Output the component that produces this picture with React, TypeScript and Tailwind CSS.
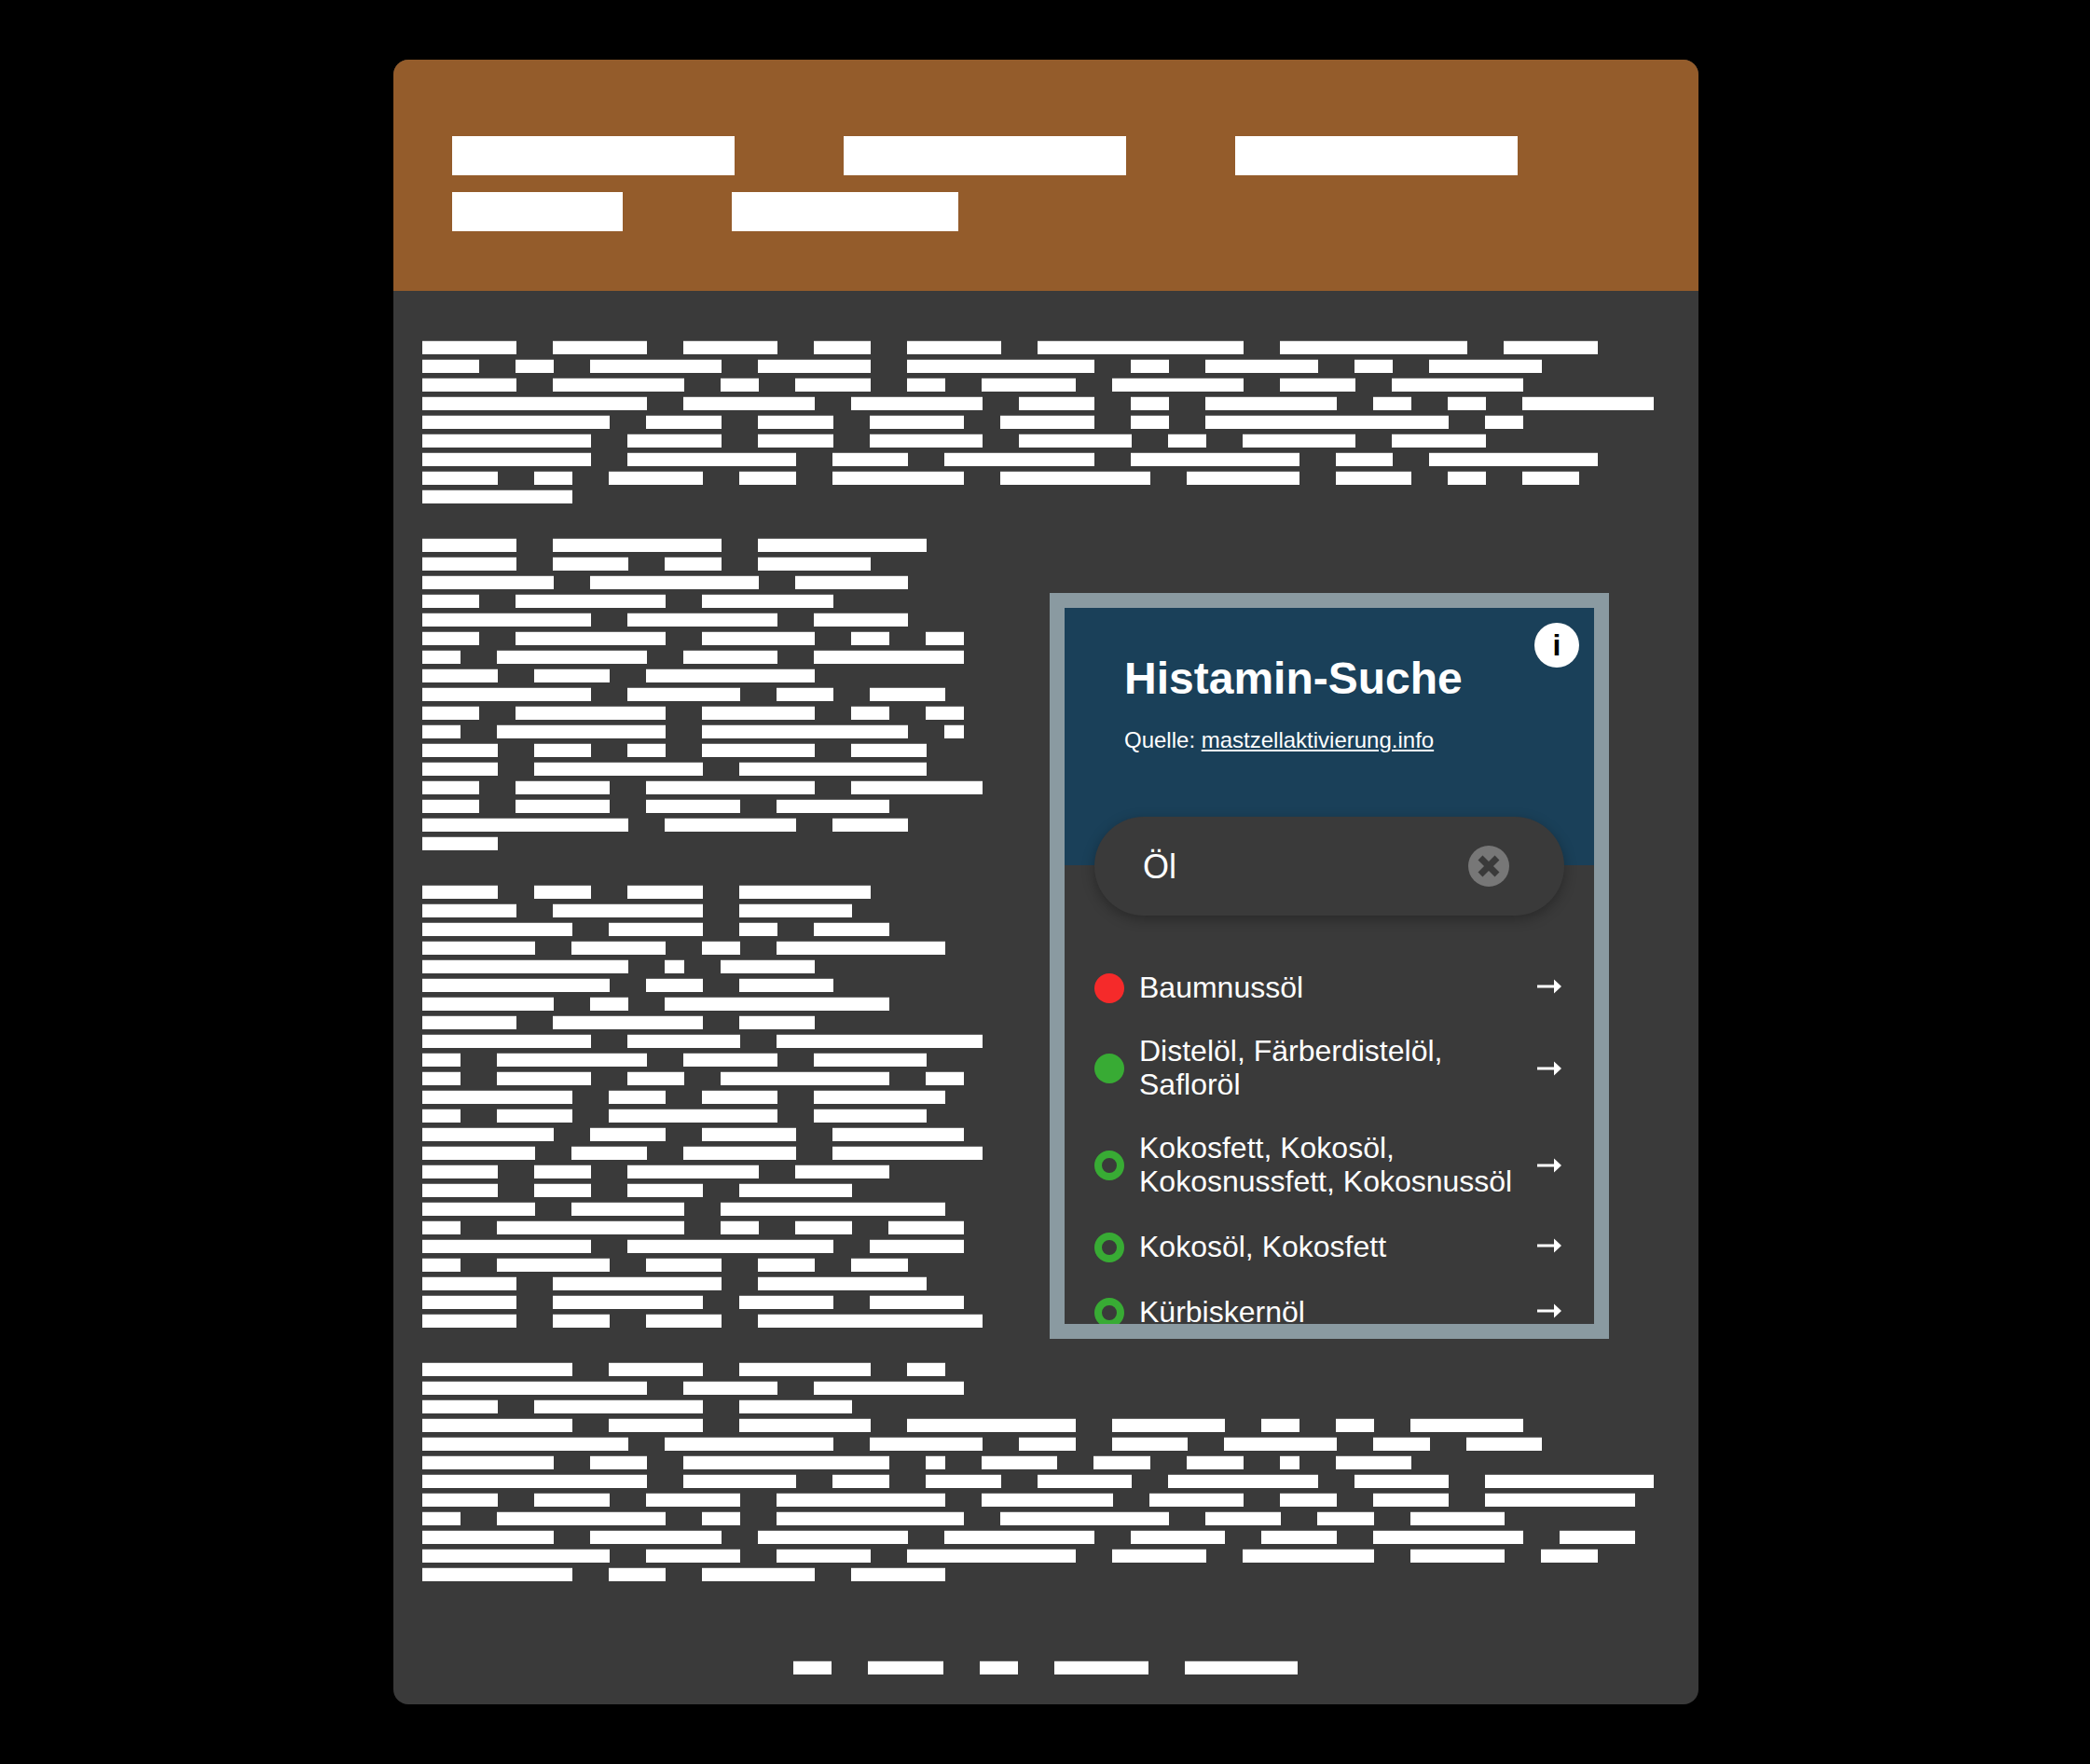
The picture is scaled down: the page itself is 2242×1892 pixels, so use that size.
const intro = [
  [5, 5, 5, 3, 5, 11, 10, 5],
  [3, 2, 7, 6, 10, 2, 6, 2, 6],
  [5, 7, 2, 4, 2, 5, 7, 4, 7],
  [12, 7, 7, 4, 2, 7, 2, 2, 7],
  [10, 4, 4, 5, 5, 2, 13, 2],
  [9, 5, 4, 6, 6, 2, 6, 5],
  [9, 9, 4, 8, 9, 3, 9],
  [4, 2, 5, 3, 7, 8, 6, 4, 2, 3],
  [8],
];

const sideOne = [
  [5, 9, 9],
  [5, 4, 3, 6],
  [7, 9, 6],
  [3, 8, 7],
  [9, 8, 5],
  [3, 8, 6, 2, 2],
  [2, 8, 5, 8],
  [4, 4, 9],
  [9, 6, 3, 4],
  [3, 8, 6, 2, 2],
  [2, 9, 11, 1],
  [4, 3, 2, 6, 4],
  [4, 9, 10],
  [3, 5, 9, 7],
  [3, 5, 5, 6],
  [11, 7, 4],
  [4],
];

const sideTwo = [
  [4, 3, 4, 7],
  [5, 8, 6],
  [8, 5, 2, 4],
  [6, 5, 2, 9],
  [11, 1, 5],
  [10, 3, 5],
  [7, 2, 12],
  [5, 8, 4],
  [9, 6, 11],
  [2, 8, 5, 6],
  [2, 5, 3, 9, 2],
  [8, 3, 4, 7],
  [2, 4, 9, 6],
  [7, 4, 5, 7],
  [6, 4, 6, 8],
  [4, 3, 7, 5],
  [4, 3, 4, 6],
  [6, 6, 12],
  [2, 10, 2, 3, 4],
  [9, 11, 5],
  [2, 6, 4, 3, 3],
  [5, 9, 9],
  [5, 8, 5, 5],
  [5, 3, 4, 12],
];

const outro = [
  [8, 5, 7, 2],
  [12, 5, 8],
  [4, 9, 6],
  [8, 5, 7, 9, 6, 2, 2, 6],
  [11, 9, 6, 3, 4, 6, 3, 4],
  [7, 3, 11, 1, 4, 3, 3, 1, 4],
  [12, 6, 3, 4, 5, 8, 5, 9],
  [4, 4, 5, 9, 7, 5, 3, 4, 8],
  [2, 9, 2, 10, 9, 4, 3, 5],
  [7, 7, 8, 8, 5, 4, 8, 4],
  [10, 5, 5, 9, 5, 7, 5, 3],
  [8, 3, 6, 5],
];

const results = [
  { name: "Baumnussöl", kind: "red", height: "min-h-[69px]", arrow: "mb-1" },
  { name: "Distelöl, Färberdistelöl, Safloröl", kind: "green", height: "min-h-[104px]", arrow: "" },
  { name: "Kokosfett, Kokosöl, Kokosnussfett, Kokosnussöl", kind: "ring", height: "min-h-[104px]", arrow: "" },
  { name: "Kokosöl, Kokosfett", kind: "ring", height: "min-h-[72px]", arrow: "mb-1" },
  { name: "Kürbiskernöl", kind: "ring", height: "min-h-[68px]", arrow: "mb-1" },
];

function Line({ words }: { words: number[] }) {
  return (
    <div className="flex h-5 gap-[39px]">
      {words.map((n, i) => (
        <div
          key={i}
          className="h-[15px] border-t border-[#666666] bg-white bg-clip-padding"
          style={{ width: n * 20 + 1 }}
        />
      ))}
    </div>
  );
}

function Para({ lines }: { lines: number[][] }) {
  return (
    <div>
      {lines.map((words, i) => (
        <Line key={i} words={words} />
      ))}
    </div>
  );
}

function HeadRow({ words }: { words: number[] }) {
  return (
    <div className="flex gap-[117px]">
      {words.map((n, i) => (
        <div key={i} className="h-[42px] bg-white" style={{ width: n * 60 + 3 }} />
      ))}
    </div>
  );
}

function Dot({ kind }: { kind: string }) {
  if (kind === "red") return <div className="h-8 w-8 shrink-0 rounded-full bg-[#f52a2a]" />;
  if (kind === "green") return <div className="h-8 w-8 shrink-0 rounded-full bg-[#38ab34]" />;
  return <div className="h-8 w-8 shrink-0 rounded-full border-8 border-[#38ab34]" />;
}

function Arrow({ className }: { className: string }) {
  return (
    <svg width="26" height="16" viewBox="0 0 26 16" className={"ml-[9px] shrink-0 " + className}>
      <rect x="0" y="6.5" width="19" height="3" fill="#ffffff" />
      <path d="M18 0.5 L26 8 L18 15.5 Z" fill="#ffffff" />
    </svg>
  );
}

function SearchWidget() {
  return (
    <div className="relative flex h-[800px] w-[600px] flex-col overflow-hidden border-16 border-[#8a9aa1] bg-[#3a3a3a] text-white">
      <div className="h-[276px] shrink-0 bg-[#1a4059] pl-16 pt-[48px]">
        <h2 className="text-[48px] font-bold leading-[56px]">Histamin-Suche</h2>
        <p className="mt-6 text-[24px] leading-7">
          Quelle: <a className="underline">mastzellaktivierung.info</a>
        </p>
      </div>
      <button className="absolute right-4 top-4 flex h-12 w-12 items-center justify-center rounded-full bg-white text-[32px] font-bold text-black">
        i
      </button>
      <div className="relative mx-8 -mt-[52px] flex h-[106px] shrink-0 items-center justify-between rounded-full bg-[#3a3a3a] pl-[52px] pr-[59px] shadow-[0_4px_14px_rgba(0,0,0,0.3)]">
        <span className="translate-y-px text-[36px]">Öl</span>
        <svg width="44" height="44" viewBox="0 0 44 44">
          <circle cx="22" cy="22" r="22" fill="#777777" />
          <path d="M13 13 L31 31 M31 13 L13 31" stroke="#3a3a3a" strokeWidth="7" fill="none" />
        </svg>
      </div>
      <ul className="mt-[43px] flex flex-col">
        {results.map((item) => (
          <li
            key={item.name}
            className={"flex shrink-0 items-center gap-4 py-4 pl-8 pr-[35px] text-[32px] leading-9 " + item.height}
          >
            <Dot kind={item.kind} />
            <span className="flex-1 -translate-y-px">{item.name}</span>
            <Arrow className={item.arrow} />
          </li>
        ))}
      </ul>
    </div>
  );
}

export default function App() {
  return (
    <div className="flex min-h-[1892px] justify-center bg-black py-16 pl-[2px] font-['Liberation_Sans',Arial,sans-serif]">
      <div className="h-[1764px] w-[1400px] overflow-hidden rounded-2xl bg-[#3a3a3a]">
        <header className="flex h-[248px] flex-col gap-[18px] bg-[#945c2b] pl-[63px] pt-[82px]">
          <HeadRow words={[5, 5, 5]} />
          <HeadRow words={[3, 4]} />
        </header>
        <main className="flex flex-col pl-[31px] pr-[33px] pt-[53px]">
          <Para lines={intro} />
          <div className="mt-8 flex items-start justify-between pr-[63px]">
            <div className="flex flex-col gap-8">
              <Para lines={sideOne} />
              <Para lines={sideTwo} />
            </div>
            <div className="mt-[59px]">
              <SearchWidget />
            </div>
          </div>
          <div className="mt-[25px]">
            <Para lines={outro} />
          </div>
          <footer className="mt-20 flex justify-center">
            <Line words={[2, 4, 2, 5, 6]} />
          </footer>
        </main>
      </div>
    </div>
  );
}
